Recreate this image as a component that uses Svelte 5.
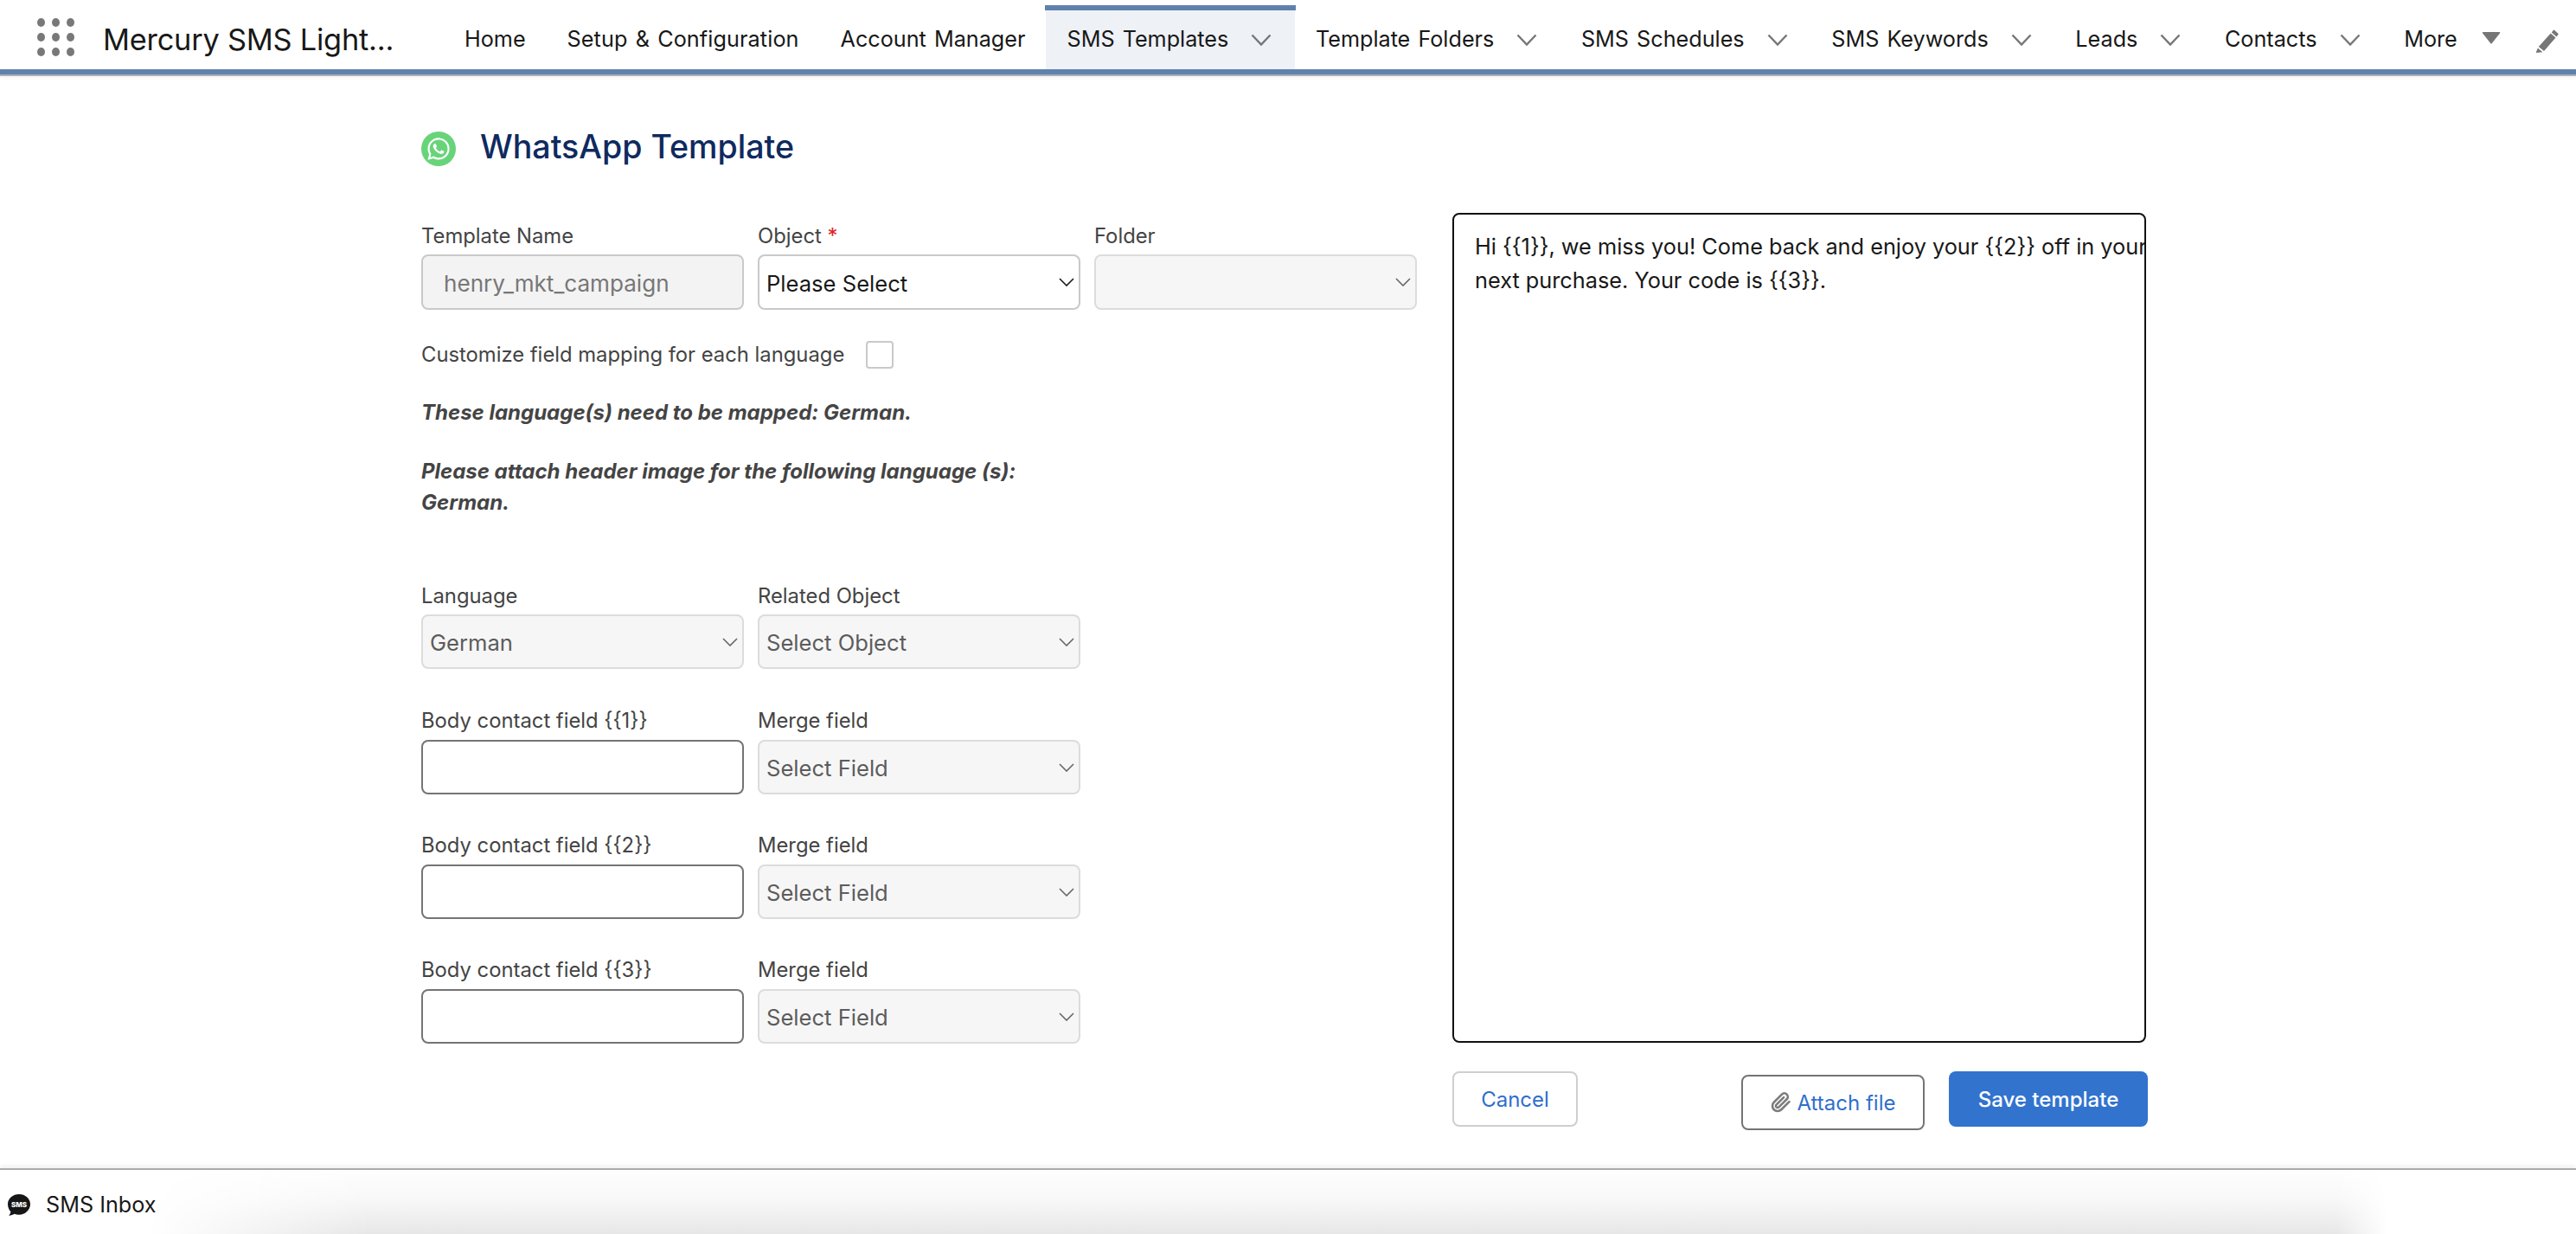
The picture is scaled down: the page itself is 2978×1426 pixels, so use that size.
<script>
  const tabs = [
    { label: 'Home' },
    { label: 'Setup & Configuration' },
    { label: 'Account Manager' },
    { label: 'SMS Templates', menu: true, active: true },
    { label: 'Template Folders', menu: true },
    { label: 'SMS Schedules', menu: true },
    { label: 'SMS Keywords', menu: true },
    { label: 'Leads', menu: true },
    { label: 'Contacts', menu: true }
  ];
</script>

{#snippet chev(cls)}
  <svg class={cls} viewBox="0 0 24 14" aria-hidden="true"><path d="M1.5 1.5 12 12.5 22.5 1.5" fill="none" stroke="currentColor" stroke-width="2.4"/></svg>
{/snippet}

{#snippet picker(text, cls = '')}
  <div class="picker {cls}">
    <select disabled={cls !== 'live'} aria-label={text || 'Folder'}>
      <option>{text}</option>
    </select>
    <svg class="pick-chev" viewBox="0 0 18 10" aria-hidden="true"><path d="M1 1l8 8 8-8" fill="none" stroke="currentColor" stroke-width="1.6"/></svg>
  </div>
{/snippet}

<div class="page">
  <header class="nav">
    <div class="dots" aria-hidden="true">
      {#each Array(9) as _}<i></i>{/each}
    </div>
    <div class="app-name">Mercury SMS Light...</div>
    <nav class="tabs">
      {#each tabs as t}
        <a class="tab" class:active={t.active} href="#top">
          <span>{t.label}</span>
          {#if t.menu}{@render chev('tab-chev')}{/if}
        </a>
      {/each}
      <a class="tab more" href="#top">
        <span>More</span>
        <svg class="tri" viewBox="0 0 22 15" aria-hidden="true"><path d="M1.5 1h19a.8.8 0 0 1 .6 1.3l-9.5 12a.8.8 0 0 1-1.2 0L.9 2.3A.8.8 0 0 1 1.5 1z" fill="currentColor"/></svg>
      </a>
    </nav>
    <svg class="pencil" viewBox="0 0 28 27" aria-hidden="true">
      <path d="M20.5 1.2c.6-.6 1.5-.4 2 0l3.600 3.200c.6.5.6 1.300.1 1.900l-1.700 2.200-5.700-5z" fill="currentColor"/>
      <path d="M17.700 4.600l5.800 5L10 25 3.800 20z" fill="currentColor"/>
      <path d="M2.800 21.600l5.600 4.600L.6 27z" fill="currentColor"/>
    </svg>
  </header>

  <main class="main">
    <div class="head">
      <svg class="wa" viewBox="-7 -7 38 38" aria-hidden="true">
        <circle cx="12" cy="12" r="19" fill="#68d47a"/>
        <path fill="#fff" d="M17.472 14.382c-.297-.149-1.758-.867-2.03-.967-.273-.099-.471-.148-.67.15-.197.297-.767.966-.94 1.164-.173.199-.347.223-.644.075-.297-.15-1.255-.463-2.39-1.475-.883-.788-1.48-1.761-1.653-2.059-.173-.297-.018-.458.13-.606.134-.133.298-.347.446-.52.149-.174.198-.298.298-.497.099-.198.05-.371-.025-.52-.075-.149-.669-1.612-.916-2.207-.242-.579-.487-.5-.669-.51-.173-.008-.371-.01-.57-.01-.198 0-.52.074-.792.372-.272.297-1.04 1.016-1.04 2.479 0 1.462 1.065 2.875 1.213 3.074.149.198 2.096 3.2 5.077 4.487.709.306 1.262.489 1.694.625.712.227 1.36.195 1.871.118.571-.085 1.758-.719 2.006-1.413.248-.694.248-1.289.173-1.413-.074-.124-.272-.198-.57-.347m-5.421 7.403h-.004a9.87 9.87 0 01-5.031-1.378l-.361-.214-3.741.982.998-3.648-.235-.374a9.86 9.86 0 01-1.51-5.26c.001-5.45 4.436-9.884 9.888-9.884 2.64 0 5.122 1.03 6.988 2.898a9.825 9.825 0 012.893 6.994c-.003 5.45-4.437 9.884-9.885 9.884m8.413-18.297A11.815 11.815 0 0012.05 0C5.495 0 .16 5.335.157 11.892c0 2.096.547 4.142 1.588 5.945L.057 24l6.305-1.654a11.882 11.882 0 005.683 1.448h.005c6.554 0 11.89-5.335 11.893-11.893a11.821 11.821 0 00-3.48-8.413z"/>
      </svg>
      <h1>WhatsApp Template</h1>
    </div>

    <div class="content">
      <form class="form">
        <div class="row3">
          <div class="field">
            <label for="tn">Template Name</label>
            <input id="tn" class="name" disabled value="henry_mkt_campaign" />
          </div>
          <div class="field">
            <span class="lab">Object <em>*</em></span>
            {@render picker('Please Select', 'live')}
          </div>
          <div class="field">
            <span class="lab">Folder</span>
            {@render picker('')}
          </div>
        </div>

        <div class="check-row">
          <span class="check-text">Customize field mapping for each language</span>
          <span class="check"></span>
        </div>

        <p class="note first">These language(s) need to be mapped: German.</p>
        <p class="note second">Please attach header image for the following language (s):<br />German.</p>

        <div class="row2 lang">
          <div class="field">
            <span class="lab">Language</span>
            {@render picker('German', 'tight')}
          </div>
          <div class="field">
            <span class="lab">Related Object</span>
            {@render picker('Select Object')}
          </div>
        </div>

        {#each [1, 2, 3] as n}
          <div class="row2 body">
            <div class="field">
              <label for={'b' + n}>Body contact field {`{{${n}}}`}</label>
              <input id={'b' + n} class="blank" />
            </div>
            <div class="field">
              <span class="lab">Merge field</span>
              {@render picker('Select Field')}
            </div>
          </div>
        {/each}
      </form>

      <section class="side">
        <div class="preview">Hi {'{{1}}'}, we miss you! Come back and enjoy your {'{{2}}'} off in your<br />next purchase. Your code is {'{{3}}'}.</div>
        <div class="actions">
          <button class="btn cancel" type="button">Cancel</button>
          <div class="right">
            <button class="btn attach" type="button">
              <svg viewBox="0 0 24 24" aria-hidden="true"><path d="M21.44 11.05l-9.19 9.19a6 6 0 0 1-8.49-8.49l9.19-9.19a4 4 0 0 1 5.66 5.66l-9.2 9.19a2 2 0 0 1-2.83-2.83l8.49-8.48" fill="none" stroke="#7c7c7c" stroke-width="2.6" stroke-linecap="round" stroke-linejoin="round"/></svg>
              Attach file
            </button>
            <button class="btn save" type="button">Save template</button>
          </div>
        </div>
      </section>
    </div>
  </main>

  <footer class="foot">
    <svg class="sms" viewBox="0 0 26 25" aria-hidden="true">
      <path d="M13 0c7 0 13 4.900 13 11.500S20 23.800 13 23.800c-2 0-3.800-.4-5.400-1-1.600 1-3.700 1.900-6.600 2 1.200-1.200 2.100-2.800 2.400-4.600C1.300 18 0 15 0 11.500 0 4.900 6 0 13 0z" fill="#161616"/>
      <text x="13" y="15" text-anchor="middle">SMS</text>
    </svg>
    <span class="foot-text">SMS Inbox</span>
  </footer>
</div>

<style>
  :global(body) {
    margin: 0;
    background: #fff;
    font-family: Inter, "Liberation Sans", sans-serif;
  }
  .page {
    height: 1426px;
    width: 2978px;
    display: flex;
    flex-direction: column;
    overflow: hidden;
  }
  .nav {
    height: 80px;
    flex: none;
    display: flex;
    align-items: stretch;
    padding-left: 43px;
    border-bottom: 6px solid #5f82ad;
    box-shadow: 0 2px 0 #a9b0b9, 0 4px 6px rgba(0, 0, 0, 0.05);
    color: #181818;
    position: relative;
    z-index: 2;
  }
  .dots {
    flex: none;
    align-self: center;
    display: grid;
    grid-template-columns: repeat(3, 9px);
    gap: 7px 8px;
    width: 43px;
    margin-top: 6px;
  }
  .dots i {
    width: 9px;
    height: 10px;
    border-radius: 50%;
    background: #787878;
  }
  .app-name {
    margin-left: 33px;
    width: 394px;
    flex: none;
    align-self: center;
    font-size: 34.3px;
    margin-top: 10px;
    letter-spacing: -0.2px;
    white-space: nowrap;
  }
  .tabs {
    display: flex;
    align-items: stretch;
  }
  .tab {
    margin-top: 12px;
    display: flex;
    align-items: center;
    padding: 0 24px;
    color: inherit;
    font-size: 25.2px;
    word-spacing: 2px;
    text-decoration: none;
    position: relative;
    white-space: nowrap;
  }
  .tab:nth-child(2) {
    letter-spacing: 0.1px;
  }
  .tab span {
    position: relative;
    top: -1px;
  }
  .tab.active {
    background: #eef1f6;
  }
  .tab.active::before {
    content: "";
    position: absolute;
    left: -1px;
    right: -1px;
    top: -6px;
    height: 6px;
    background: #5f82ad;
  }
  :global(.tab-chev) {
    width: 24px;
    height: 14px;
    margin: 0 2.6px 0 26px;
    color: #767676;
  }
  .tri {
    width: 22px;
    height: 15px;
    margin: -6px 0 0 28px;
    color: #767676;
  }
  .pencil {
    position: absolute;
    left: 2931px;
    top: 34px;
    width: 28px;
    height: 27px;
    color: #767676;
  }

  .main {
    flex: 1;
    padding: 66px 0 0 487px;
    min-height: 0;
  }
  .head {
    display: flex;
    align-items: center;
    gap: 28px;
    height: 40px;
    margin-bottom: 54px;
  }
  .wa {
    width: 40px;
    height: 40px;
    flex: none;
  }
  h1 {
    margin: 0;
    font-size: 37.6px;
    font-weight: 500;
    color: #0f2a5f;
    position: relative;
    top: -3px;
  }
  .content {
    display: flex;
  }
  .form {
    width: 1192px;
    flex: none;
    padding-top: 11px;
    font-size: 23.8px;
    color: #444;
  }
  .row3 {
    display: grid;
    grid-template-columns: repeat(3, 373px);
    gap: 16px;
  }
  .row2 {
    display: grid;
    grid-template-columns: repeat(2, 373px);
    gap: 16px;
  }
  .field label,
  .lab {
    display: block;
    height: 32px;
    line-height: 32px;
    margin-bottom: 5px;
  }
  .lab em {
    color: #e02020;
    font-style: normal;
  }
  input,
  select {
    display: block;
    width: 100%;
    height: 64px;
    box-sizing: border-box;
    font: inherit;
    border-radius: 8px;
    outline: none;
    margin: 0;
  }
  .name {
    background: #f3f3f3;
    border: 2px solid #c9c9c9;
    color: #777;
    padding: 2px 24px 0;
    font-size: 26.1px;
  }
  .picker {
    position: relative;
  }
  select {
    appearance: none;
    opacity: 1;
    background: #f6f6f6;
    border: 2px solid #dcdcdc;
    color: #5c5c5c;
    padding: 2px 40px 0 8px;
    font-size: 25.6px;
  }
  .live select {
    background: #fff;
    border-color: #c9c9c9;
    color: #181818;
  }
  .pick-chev {
    position: absolute;
    right: 7px;
    top: 27px;
    width: 18px;
    height: 10px;
    color: #666;
    pointer-events: none;
  }
  .live .pick-chev {
    color: #181818;
  }
  .check-row {
    margin-top: 36px;
    height: 32px;
    display: flex;
    align-items: center;
  }
  .check-text {
    width: 514px;
    flex: none;
    position: relative;
    top: -1px;
  }
  .check {
    width: 32px;
    height: 32px;
    box-sizing: border-box;
    background: #fff;
    border: 2px solid #c9c9c9;
    border-radius: 4px;
  }
  .note {
    margin: 0;
    font-style: italic;
    font-weight: 700;
    line-height: 36px;
    font-size: 24px;
    color: #444;
  }
  .first {
    margin-top: 33px;
  }
  .second {
    margin-top: 32px;
  }
  .lang {
    margin-top: 74px;
  }
  .lang select {
    height: 63px;
  }
  .body {
    margin-top: 42px;
  }
  .body label,
  .body .lab {
    height: 30px;
    line-height: 30px;
    margin-bottom: 7px;
    padding-top: 2px;
  }
  .body input,
  .body select {
    height: 63px;
  }
  .lang + .body {
    margin-top: 43px;
  }
  .blank {
    background: #fff;
    border: 2px solid #747474;
  }
  .side {
    width: 804px;
    flex: none;
  }
  .preview {
    width: 802px;
    height: 959px;
    box-sizing: border-box;
    border: 2px solid #111;
    border-radius: 8px;
    padding: 17px 0 0 24px;
    font-size: 25.3px;
    line-height: 39px;
    color: #181818;
    white-space: nowrap;
    overflow: hidden;
  }
  .actions {
    margin-top: 33px;
    display: flex;
    justify-content: space-between;
  }
  .right {
    display: flex;
    gap: 28px;
  }
  .btn {
    height: 64px;
    box-sizing: border-box;
    border-radius: 8px;
    font: inherit;
    font-size: 24px;
    background: #fff;
    color: #2f6fcd;
    padding: 0;
  }
  .cancel {
    width: 145px;
    border: 2px solid #cfcfcf;
  }
  .attach {
    width: 212px;
    margin-top: 4px;
    border: 2px solid #747474;
    display: flex;
    align-items: center;
    justify-content: center;
    gap: 7px;
  }
  .attach svg {
    width: 24px;
    height: 24px;
    flex: none;
  }
  .save {
    width: 230px;
    border: 0;
    background: #3273ce;
    color: #fff;
    font-weight: 500;
  }
  .foot {
    height: 76px;
    flex: none;
    box-sizing: border-box;
    border-top: 2px solid #ababab;
    display: flex;
    align-items: center;
    padding: 6px 0 0 9px;
    gap: 18px;
    font-size: 25.2px;
    color: #181818;
    box-shadow: 0 -3px 5px rgba(0, 0, 0, 0.06);
    position: relative;
  }
  .foot::before {
    content: "";
    position: absolute;
    left: 170px;
    right: 218px;
    top: 0;
    bottom: 0;
    background: linear-gradient(#fefefe 0%, #f8f8f8 45%, #e7e7e7 100%);
    -webkit-mask-image: linear-gradient(to right, transparent, #000 260px, #000 calc(100% - 60px), transparent);
    mask-image: linear-gradient(to right, transparent, #000 260px, #000 calc(100% - 60px), transparent);
  }
  .sms,
  .foot-text {
    position: relative;
  }
  .sms {
    width: 26px;
    height: 25px;
    flex: none;
  }
  .sms text {
    font-family: Inter, sans-serif;
    font-size: 8px;
    font-weight: 800;
    fill: #fff;
  }
</style>
